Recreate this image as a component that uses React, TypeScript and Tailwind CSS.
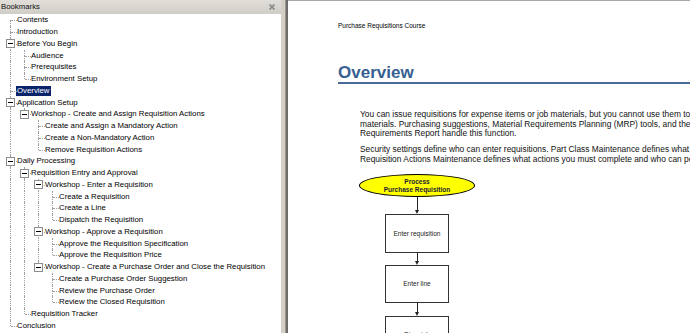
import React from 'react';

type Bookmark = { label: string; level: number; open?: boolean; selected?: boolean };

const bookmarks: Bookmark[] = [
  { label: 'Contents', level: 0 },
  { label: 'Introduction', level: 0 },
  { label: 'Before You Begin', level: 0, open: true },
  { label: 'Audience', level: 1 },
  { label: 'Prerequisites', level: 1 },
  { label: 'Environment Setup', level: 1 },
  { label: 'Overview', level: 0, selected: true },
  { label: 'Application Setup', level: 0, open: true },
  { label: 'Workshop - Create and Assign Requisition Actions', level: 1, open: true },
  { label: 'Create and Assign a Mandatory Action', level: 2 },
  { label: 'Create a Non-Mandatory Action', level: 2 },
  { label: 'Remove Requisition Actions', level: 2 },
  { label: 'Daily Processing', level: 0, open: true },
  { label: 'Requisition Entry and Approval', level: 1, open: true },
  { label: 'Workshop - Enter a Requisition', level: 2, open: true },
  { label: 'Create a Requisition', level: 3 },
  { label: 'Create a Line', level: 3 },
  { label: 'Dispatch the Requisition', level: 3 },
  { label: 'Workshop - Approve a Requisition', level: 2, open: true },
  { label: 'Approve the Requisition Specification', level: 3 },
  { label: 'Approve the Requisition Price', level: 3 },
  { label: 'Workshop - Create a Purchase Order and Close the Requisition', level: 2, open: true },
  { label: 'Create a Purchase Order Suggestion', level: 3 },
  { label: 'Review the Purchase Order', level: 3 },
  { label: 'Review the Closed Requisition', level: 3 },
  { label: 'Requisition Tracker', level: 1 },
  { label: 'Conclusion', level: 0 },
];

// true when a later row sits at `level` before the tree climbs above it
function hasNextAt(index: number, level: number) {
  for (let j = index + 1; j < bookmarks.length; j++) {
    if (bookmarks[j].level < level) return false;
    if (bookmarks[j].level === level) return true;
  }
  return false;
}

const dots = 'absolute border-l border-dotted border-[#a0a0a0]';

const TreeRow = ({ item, index }: { item: Bookmark; index: number }) => {
  const guides = Array.from({ length: item.level }, (_, l) => hasNextAt(index, l));
  const next = hasNextAt(index, item.level);

  return (
    <div className="flex h-[11.75px] items-center">
      {guides.map((g, i) => (
        <div key={i} className="relative h-full w-[14px] shrink-0">
          {g && <span className={`${dots} left-[7px] top-0 bottom-0`} />}
        </div>
      ))}
      <div className="relative h-full w-[14px] shrink-0">
        {index > 0 && <span className={`${dots} left-[7px] top-0 h-1/2`} />}
        {next && <span className={`${dots} left-[7px] top-1/2 bottom-0`} />}
        <span className="absolute left-[8px] top-1/2 w-[6px] border-t border-dotted border-[#a0a0a0]" />
        {item.open && (
          <span className="absolute left-[3px] top-[1.5px] flex h-[9px] w-[9px] items-center justify-center border border-[#8c8c8c] bg-white">
            <span className="h-px w-[5px] bg-black" />
          </span>
        )}
      </div>
      <span
        className={`-ml-[1px] whitespace-nowrap px-[1px] leading-[10px] ${
          item.selected ? 'bg-[#0a246a] text-white' : 'text-black'
        }`}
      >
        {item.label}
      </span>
    </div>
  );
};

const Arrow = ({ h }: { h: string }) => (
  <div className={`flex flex-col items-center ${h}`}>
    <div className="w-px flex-1 bg-[#222]" />
    <div className="h-0 w-0 border-x-[2px] border-t-[4px] border-x-transparent border-t-[#222]" />
  </div>
);

const Step = ({ label, h }: { label: string; h: string }) => (
  <div className={`flex w-[64px] items-center justify-center border border-[#333] bg-white text-[6.5px] text-[#222] ${h}`}>
    {label}
  </div>
);

export default function App() {
  return (
    <div className="flex h-[333px] w-[690px] overflow-hidden bg-white font-['Liberation_Sans',Arial,sans-serif]">
      <div className="flex w-[281px] shrink-0 flex-col">
        <div className="flex h-[14px] items-center justify-between bg-gradient-to-b from-[#e2dfda] to-[#d0cdc7] pl-[1px] pr-[6px] text-[7.8px] text-[#111]">
          <span>Bookmarks</span>
          <svg width="6" height="6" viewBox="0 0 6 6">
            <path d="M0.5 0.5 L5.5 5.5 M5.5 0.5 L0.5 5.5" stroke="#8a8a8a" strokeWidth="1.6" />
          </svg>
        </div>
        <div className="flex-1 pl-[3px] pt-[0.4px] text-[7.8px]">
          {bookmarks.map((b, i) => (
            <TreeRow key={i} item={b} index={i} />
          ))}
        </div>
      </div>

      <div className="flex w-[7px] shrink-0">
        <div className="w-[4px] bg-[#d4d0c8]" />
        <div className="w-px bg-[#9a9892]" />
        <div className="w-[2px] bg-[#6f6d69]" />
      </div>

      <div className="relative flex-1 overflow-hidden border-t border-[#a7a7a7] pl-[50px] pt-[21px]">
        <p className="whitespace-nowrap text-[6.5px] leading-[8px] text-black">Purchase Requisitions Course</p>
        <h1 className="-mr-[50px] mt-[34px] border-b-[2px] border-[#4a6a97] text-[17px] font-bold leading-[18px] text-[#365f91]">
          Overview
        </h1>
        <div className="ml-[22px] mt-[26px] text-[8.4px] leading-[9.5px] text-[#111]">
          <p className="whitespace-nowrap">You can issue requisitions for expense items or job materials, but you cannot use them to purchase</p>
          <p className="whitespace-nowrap">materials. Purchasing suggestions, Material Requirements Planning (MRP) tools, and the Time-Phased</p>
          <p className="whitespace-nowrap">Requirements Report handle this function.</p>
          <p className="mt-[6.5px] whitespace-nowrap">Security settings define who can enter requisitions. Part Class Maintenance defines what purchasing</p>
          <p className="whitespace-nowrap">Requisition Actions Maintenance defines what actions you must complete and who can perform them.</p>
        </div>
        <div className="ml-[21px] mt-[10px] flex w-[116px] flex-col items-center">
          <div className="flex h-[23px] w-[116px] flex-col items-center justify-center rounded-[50%] border border-black bg-[#ffff00] text-[6.5px] font-bold leading-[8px] text-[#1b1b3a]">
            <span>Process</span>
            <span>Purchase Requisition</span>
          </div>
          <Arrow h="h-[17px]" />
          <Step label="Enter requisition" h="h-[39px]" />
          <Arrow h="h-[12px]" />
          <Step label="Enter line" h="h-[38px]" />
          <Arrow h="h-[13px]" />
          <Step label="Dispatch" h="h-[38px]" />
        </div>
      </div>
    </div>
  );
}
